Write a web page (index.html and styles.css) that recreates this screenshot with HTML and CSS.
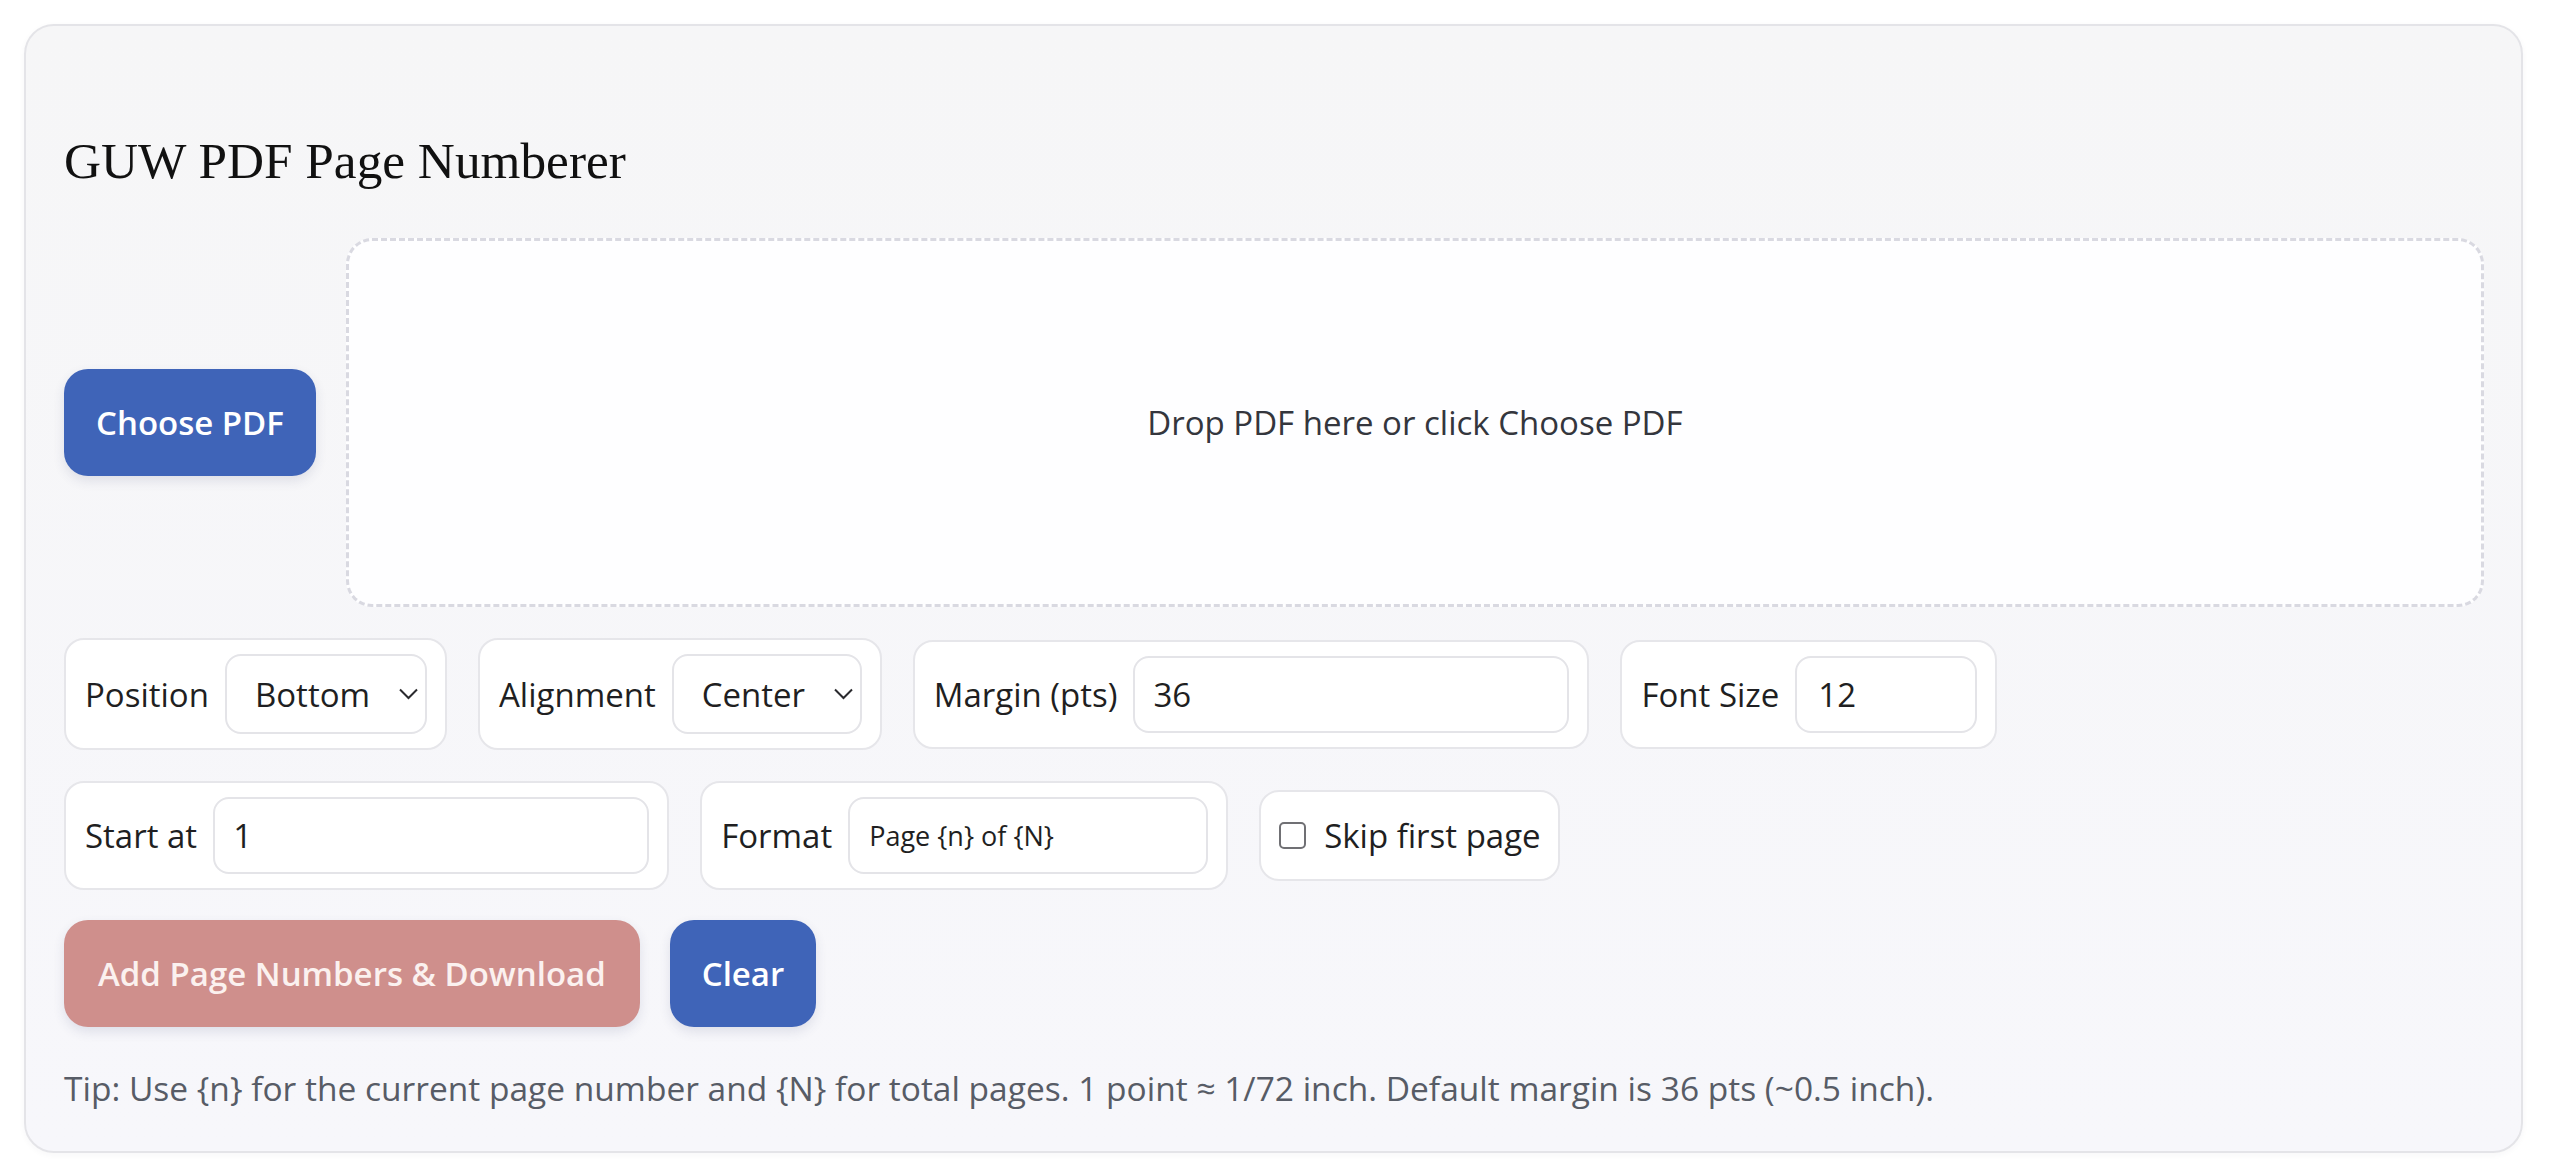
FILE: index.html
```html
<!DOCTYPE html>
<html lang="en">
<head>
<meta charset="utf-8">
<title>GUW PDF Page Numberer</title>
<link rel="stylesheet" href="styles.css">
</head>
<body>
<main class="card">
  <h1 class="title">GUW PDF Page Numberer</h1>

  <div class="upload-row">
    <button class="btn btn-primary" type="button">Choose PDF</button>
    <div class="dropzone">Drop PDF here or click Choose PDF</div>
  </div>

  <div class="row">
    <label class="group">
      <span class="label">Position</span>
      <span class="select-wrap select-position">
        <select class="select"><option>Bottom</option><option>Top</option></select>
        <svg class="chevron" viewBox="0 0 19 12" aria-hidden="true"><path d="M1 1.5 L9.5 10 L18 1.5"/></svg>
      </span>
    </label>
    <label class="group">
      <span class="label">Alignment</span>
      <span class="select-wrap select-align">
        <select class="select"><option>Center</option><option>Left</option><option>Right</option></select>
        <svg class="chevron" viewBox="0 0 19 12" aria-hidden="true"><path d="M1 1.5 L9.5 10 L18 1.5"/></svg>
      </span>
    </label>
    <label class="group">
      <span class="label">Margin (pts)</span>
      <input class="input input-wide" type="text" value="36">
    </label>
    <label class="group">
      <span class="label">Font Size</span>
      <input class="input input-narrow" type="text" value="12">
    </label>
  </div>

  <div class="row">
    <label class="group">
      <span class="label">Start at</span>
      <input class="input input-wide" type="text" value="1">
    </label>
    <label class="group">
      <span class="label">Format</span>
      <input class="input input-format" type="text" value="Page {n} of {N}">
    </label>
    <label class="group group-check">
      <input class="check" type="checkbox">
      <span class="label">Skip first page</span>
    </label>
  </div>

  <div class="row row-actions">
    <button class="btn btn-disabled" type="button">Add Page Numbers &amp; Download</button>
    <button class="btn btn-primary" type="button">Clear</button>
  </div>

  <p class="tip">Tip: Use {n} for the current page number and {N} for total pages. 1 point ≈ 1/72 inch. Default margin is 36 pts (~0.5 inch).</p>
</main>
</body>
</html>
```

FILE: styles.css
```css
html, body {
  margin: 0;
  background: #ffffff;
}

body {
  padding: 24px 37px 19px 24px;
  font-family: "Open Sans", "Noto Sans", sans-serif;
  font-size: 33px;
  color: #1f1f22;
}

.card {
  display: block;
  border: 2px solid #e4e4e8;
  border-radius: 30px;
  background: linear-gradient(180deg, #f6f6f7 0%, #f7f7fb 100%);
  padding: 38px 37px 40px 38px;
  box-shadow: 0 2px 6px rgba(40, 40, 70, 0.04);
}

.title {
  font-family: "Liberation Serif", "Times New Roman", serif;
  font-weight: 400;
  font-size: 51.3px;
  line-height: 57px;
  color: #111;
  margin: 68px 0 49px 0;
}

.upload-row {
  display: flex;
  align-items: center;
  gap: 30px;
}

.dropzone {
  flex: 1;
  height: 369px;
  box-sizing: border-box;
  border: 3px dashed #d9d9e1;
  border-radius: 26px;
  background: #fefeff;
  display: flex;
  align-items: center;
  justify-content: center;
  color: #34363d;
}

.btn {
  font-family: inherit;
  font-size: 33px;
  font-weight: 600;
  height: 107px;
  padding: 0 32px;
  border: none;
  border-radius: 24px;
  color: #ffffff;
  box-shadow: 0 5px 12px rgba(50, 60, 110, 0.12);
  cursor: pointer;
  white-space: nowrap;
}

.btn-primary {
  background: #3f64b8;
}

.btn-disabled {
  background: #cf8f8c;
  color: #fbf1ef;
  padding: 0 34px;
}

.row {
  display: flex;
  align-items: center;
  gap: 31px;
  margin-top: 31px;
}

.row-actions {
  gap: 30px;
  margin-top: 30px;
}

.group {
  display: flex;
  align-items: center;
  gap: 16px;
  background: #ffffff;
  border: 2px solid #e6e6ea;
  border-radius: 20px;
  padding: 14px 18px 14px 19px;
}

.group-check {
  gap: 18px;
  padding: 13px 17px 13px 18px;
  height: 91px;
  box-sizing: border-box;
}

.label {
  white-space: nowrap;
  color: #1f1f22;
}

.select-wrap {
  position: relative;
  display: block;
}

.select {
  appearance: none;
  -webkit-appearance: none;
  font-family: inherit;
  font-size: 33px;
  color: #1f1f22;
  height: 80px;
  box-sizing: border-box;
  border: 2px solid #e4e4e8;
  border-radius: 16px;
  background: #ffffff;
  padding: 0 40px 0 28px;
  display: block;
}

.select-position .select { width: 202px; }
.select-align .select { width: 190px; }

.chevron {
  position: absolute;
  right: 9px;
  top: 34px;
  width: 19px;
  height: 12px;
  pointer-events: none;
  fill: none;
  stroke: #2a2a2e;
  stroke-width: 2;
}

.input {
  font-family: inherit;
  font-size: 33px;
  color: #1f1f22;
  height: 77px;
  box-sizing: border-box;
  border: 2px solid #e4e4e8;
  border-radius: 16px;
  background: #ffffff;
  padding: 0 18px;
  display: block;
}

.input-wide { width: 436px; }
.input-narrow { width: 182px; padding-left: 21px; }
.input-format {
  width: 360px;
  font-size: 27px;
  padding-left: 19px;
}

.check {
  appearance: none;
  -webkit-appearance: none;
  width: 27px;
  height: 27px;
  margin: 0;
  border: 2px solid #707074;
  border-radius: 5px;
  background: #ffffff;
  box-sizing: border-box;
}

.tip {
  margin: 38px 0 0 0;
  color: #575c66;
  font-size: 33.5px;
}
```
